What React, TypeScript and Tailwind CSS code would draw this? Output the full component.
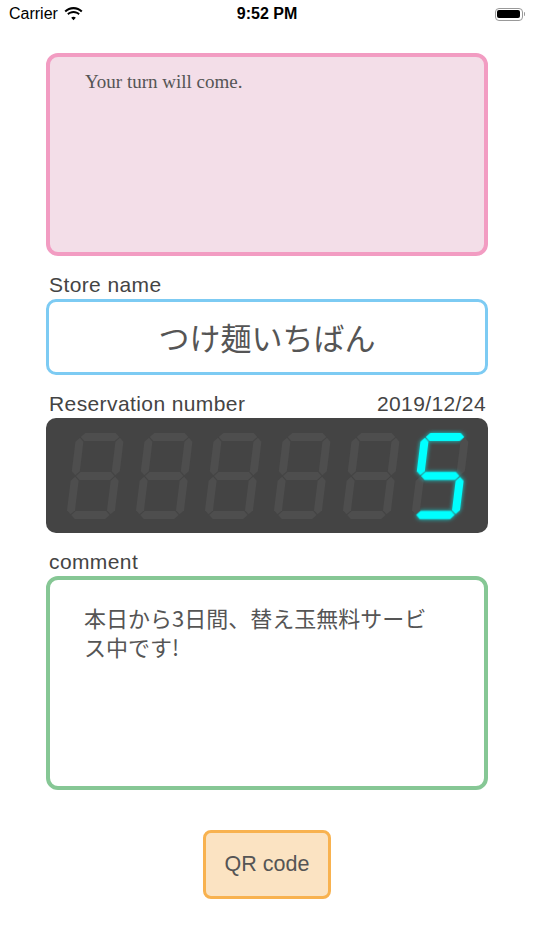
import React from 'react';

const SEGMENT_KEYS = ['a', 'b', 'c', 'd', 'e', 'f', 'g'];

const W = 48;
const H = 86;
const T = 8;
const G = 0.8;

function hSeg(y: number) {
  const h = T / 2;
  const x0 = h + G;
  const x1 = W - h - G;
  return `${x0},${y} ${x0 + h},${y - h} ${x1 - h},${y - h} ${x1},${y} ${x1 - h},${y + h} ${x0 + h},${y + h}`;
}

function vSeg(x: number, y0: number, y1: number) {
  const h = T / 2;
  const a = y0 + G;
  const b = y1 - G;
  return `${x},${a} ${x + h},${a + h} ${x + h},${b - h} ${x},${b} ${x - h},${b - h} ${x - h},${a + h}`;
}

const h = T / 2;
const mid = H / 2;
const shapes: Record<string, string> = {
  a: hSeg(h),
  g: hSeg(mid),
  d: hSeg(H - h),
  f: vSeg(h, h, mid),
  b: vSeg(W - h, h, mid),
  e: vSeg(h, mid, H - h),
  c: vSeg(W - h, mid, H - h),
};

const DIGITS: Record<string, string> = {
  '0': 'abcdef',
  '1': 'bc',
  '2': 'abged',
  '3': 'abgcd',
  '4': 'fgbc',
  '5': 'afgcd',
  '6': 'afgedc',
  '7': 'abc',
  '8': 'abcdefg',
  '9': 'abcdfg',
  ' ': '',
};

function SevenSegment({ value }: { value: string }) {
  const on = DIGITS[value] ?? '';
  return (
    <svg width="59" height="86" viewBox="0 0 59 86" className="overflow-visible">
      <g transform="translate(10.5,0) skewX(-7)">
        {SEGMENT_KEYS.map((key) => (
          <polygon
            key={key}
            points={shapes[key]}
            fill={on.includes(key) ? '#00ffff' : '#4e4e4e'}
            style={on.includes(key) ? { filter: 'drop-shadow(0 0 2px rgba(0,255,255,0.8))' } : undefined}
          />
        ))}
      </g>
    </svg>
  );
}

function StatusBar() {
  return (
    <div className="relative flex h-[28px] items-center px-[9px] text-[16px] text-black [font-family:'Liberation_Sans',sans-serif]">
      <div className="flex items-center gap-[6px]">
        <span>Carrier</span>
        <svg width="19" height="14" viewBox="0 0 19 14">
          <path d="M9.5 2.2c2.9 0 5.6 1.1 7.6 3l1.4-1.5C16.1 1.4 12.9 0 9.5 0S2.9 1.4.5 3.7l1.4 1.5c2-1.9 4.7-3 7.6-3z" fill="#000" />
          <path d="M9.5 6c1.9 0 3.6.7 4.9 1.9l1.4-1.5C14.1 4.8 11.9 3.9 9.5 3.9S4.9 4.8 3.2 6.4l1.4 1.5C5.9 6.7 7.6 6 9.5 6z" fill="#000" />
          <path d="M9.5 9.8c.9 0 1.7.3 2.3.9l-2.3 2.5-2.3-2.5c.6-.6 1.4-.9 2.3-.9z" fill="#000" />
        </svg>
      </div>
      <span className="absolute left-1/2 -translate-x-1/2 font-bold">9:52 PM</span>
      <div className="ml-auto flex items-center gap-[1px]">
        <div className="flex h-[13px] w-[28px] items-center rounded-[4px] border border-[#999] p-[1.5px]">
          <div className="h-full w-full rounded-[2px] bg-black" />
        </div>
        <div className="h-[4px] w-[1.5px] rounded-r bg-[#999]" />
      </div>
    </div>
  );
}

export default function App() {
  const number = '     5';
  return (
    <div className="min-h-[950px] w-[534px] bg-white text-[#444] [font-family:'Liberation_Sans','Noto_Sans_CJK_JP',sans-serif]">
      <StatusBar />
      <div className="flex flex-col px-[46px] pt-[25px]">
        <div className="h-[203px] rounded-[12px] border-4 border-[#f29cc2] bg-[#f3dee8] pl-[35px] pt-[11px]">
          <p className="text-[19px] text-[#555] [font-family:'Liberation_Serif',serif]">Your turn will come.</p>
        </div>

        <label className="mt-[15px] pl-[3px] text-[21px] leading-[28px] tracking-[0.4px]">Store name</label>
        <div className="flex h-[76px] items-center justify-center rounded-[10px] border-[3px] border-[#7dcbf3] text-[31px] text-[#555] [font-family:'Noto_Sans_CJK_JP',sans-serif]">
          つけ麺いちばん
        </div>

        <div className="mt-[15px] flex items-center justify-between pl-[3px] pr-[2px] text-[21px] leading-[28px] tracking-[0.4px]">
          <span>Reservation number</span>
          <span>2019/12/24</span>
        </div>
        <div className="flex h-[115px] items-center gap-[10px] rounded-[10px] bg-[#444444] pl-[20px] pt-[1px]">
          {number.split('').map((d, i) => (
            <SevenSegment key={i} value={d} />
          ))}
        </div>

        <label className="mt-[15px] pl-[3px] text-[21px] leading-[28px] tracking-[0.4px]">comment</label>
        <div className="h-[214px] rounded-[12px] border-4 border-[#86c795] pl-[34px] pr-[48px] pt-[23px]">
          <p className="text-[22px] leading-[29px] text-[#555] [font-family:'Noto_Sans_CJK_JP',sans-serif]">
            本日から3日間、替え玉無料サービス中です!
          </p>
        </div>

        <div className="mt-[40px] flex justify-center">
          <button className="h-[69px] w-[128px] rounded-[8px] border-[3px] border-[#f8b24f] bg-[#fbe3c2] text-[21.5px] text-[#555]">
            QR code
          </button>
        </div>
      </div>
    </div>
  );
}
